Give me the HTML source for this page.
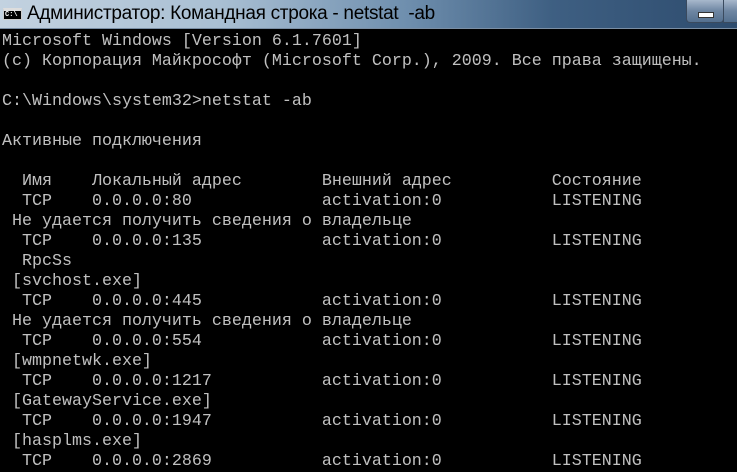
<!DOCTYPE html>
<html><head><meta charset="utf-8"><style>
html,body{margin:0;padding:0;width:737px;height:457px;overflow:hidden;background:#000}
#tb{position:absolute;left:0;top:0;width:737px;height:28px;background:linear-gradient(90deg,#c3d2e0 0%,#a9bfd3 30%,#6f8fae 55%,#3e5f82 75%,#2e4c6e 100%);border-bottom:1px solid #7a8ea4;z-index:2}
#ic{position:absolute;left:3px;top:8px;width:19px;height:12px;background:#000;border:1px solid #ccc;border-top:3px solid #ddd;box-sizing:border-box;color:#fff;font:bold 7px "Liberation Mono",monospace;line-height:8px;padding-left:1px}
#tt{position:absolute;left:27px;top:3px;font:19px "Liberation Sans","DejaVu Sans",sans-serif;color:#000;white-space:pre;letter-spacing:-0.3px}
#mn{position:absolute;left:686px;top:0;width:36px;height:22px;border:1px solid #3a4a5e;border-top:none;border-radius:0 0 4px 4px;background:linear-gradient(#a8b8cc,#6e86a2 50%,#54708f)}
#mn:after{content:"";position:absolute;left:11px;top:12px;width:14px;height:4px;background:#fff;border:1px solid #333}
#mx{position:absolute;left:723px;top:0;width:20px;height:22px;border:1px solid #3a4a5e;border-top:none;background:linear-gradient(#a8b8cc,#6e86a2 50%,#54708f)}
#con{position:absolute;left:2px;top:32px;margin:0;font:16.67px/20px "Liberation Mono","DejaVu Sans Mono",monospace;color:#c0c0c0;white-space:pre}
</style></head><body>
<div id="tb"><div id="ic">C:\</div><div id="tt">Администратор: Командная строка - netstat  -ab</div><div id="mn"></div><div id="mx"></div></div>
<pre id="con">Microsoft Windows [Version 6.1.7601]
(c) Корпорация Майкрософт (Microsoft Corp.), 2009. Все права защищены.

C:\Windows\system32&gt;netstat -ab

Активные подключения

  Имя    Локальный адрес        Внешний адрес          Состояние
  TCP    0.0.0.0:80             activation:0           LISTENING
 Не удается получить сведения о владельце
  TCP    0.0.0.0:135            activation:0           LISTENING
  RpcSs
 [svchost.exe]
  TCP    0.0.0.0:445            activation:0           LISTENING
 Не удается получить сведения о владельце
  TCP    0.0.0.0:554            activation:0           LISTENING
 [wmpnetwk.exe]
  TCP    0.0.0.0:1217           activation:0           LISTENING
 [GatewayService.exe]
  TCP    0.0.0.0:1947           activation:0           LISTENING
 [hasplms.exe]
  TCP    0.0.0.0:2869           activation:0           LISTENING</pre>
</body></html>
